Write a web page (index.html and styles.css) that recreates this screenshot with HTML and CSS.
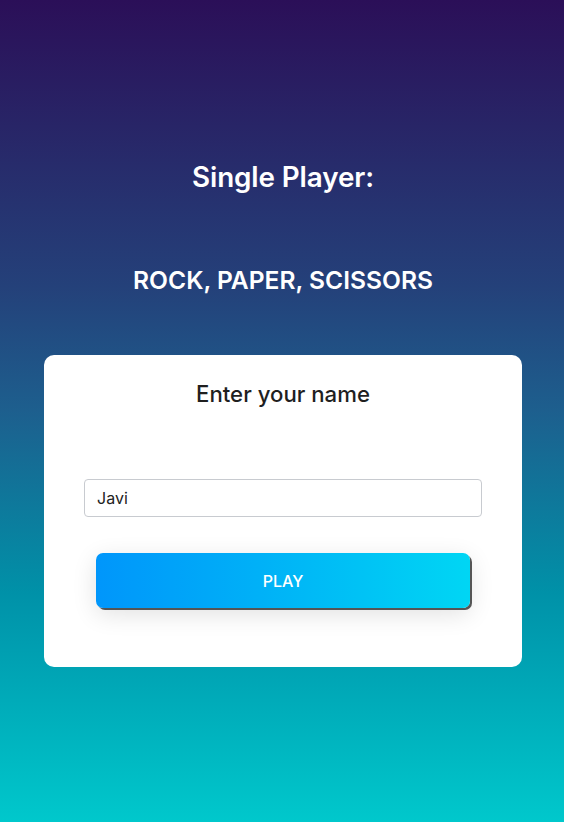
FILE: index.html
```html
<!DOCTYPE html>
<html>
<head>
<meta charset="utf-8">
<link rel="stylesheet" href="styles.css">
</head>
<body>
<main class="page">
  <h1 class="title">Single Player:</h1>
  <h2 class="subtitle">ROCK, PAPER, SCISSORS</h2>
  <section class="card">
    <h3 class="card-title">Enter your name</h3>
    <input class="name-input" type="text" value="Javi">
    <button class="play-btn">PLAY</button>
  </section>
</main>
</body>
</html>
```
FILE: styles.css
```css
* { box-sizing: border-box; }
html, body { margin: 0; padding: 0; }
body {
  width: 564px;
  height: 822px;
  font-family: Inter, "Noto Sans", sans-serif;
  background: linear-gradient(to bottom, #2b0f58 0%, #24417a 35%, #1d5f8e 50%, #0091a8 72%, #00c8cc 100%);
}
.page {
  display: flex;
  flex-direction: column;
  align-items: center;
  padding: 160px 42px 0 44px;
}
.title {
  margin: 0;
  color: #fff;
  font-size: 27.8px;
  font-weight: 600;
  line-height: 34px;
  letter-spacing: -0.1px;
}
.subtitle {
  margin: 71px 0 0;
  color: #fff;
  font-size: 24.6px;
  font-weight: 600;
  line-height: 30px;
}
.card {
  margin-top: 60px;
  width: 478px;
  height: 312px;
  background: #fff;
  border-radius: 10px;
  display: flex;
  flex-direction: column;
  align-items: center;
  padding: 24px 40px 0;
}
.card-title {
  margin: 0;
  font-size: 22.2px;
  font-weight: 500;
  color: #1f1f1f;
  line-height: 30px;
}
.name-input {
  margin-top: 70px;
  width: 398px;
  height: 38px;
  border: 1px solid #c8cbd0;
  border-radius: 4px;
  padding: 0 12px;
  font-family: Inter, "Noto Sans", sans-serif;
  font-size: 16px;
  color: #222;
  background: #fff;
}
.play-btn {
  margin-top: 36px;
  width: 374px;
  height: 55px;
  border: none;
  border-radius: 7px;
  background: linear-gradient(to right, #0096fb, #00a8f8 30%, #00c2f5 70%, #00d6f4);
  color: #fff;
  font-family: Inter, "Noto Sans", sans-serif;
  font-size: 16px;
  font-weight: 500;
  box-shadow: 2px 2px 0 #555, 0 6px 24px rgba(0,0,0,0.12);
}
```
